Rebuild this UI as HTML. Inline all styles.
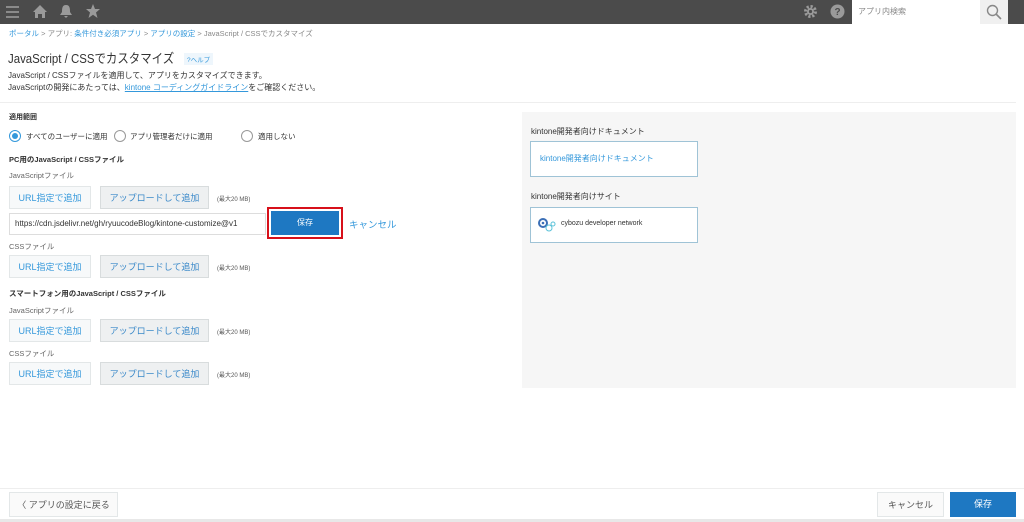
<!DOCTYPE html>
<html><head><meta charset="utf-8"><style>
*{box-sizing:border-box;margin:0;padding:0}
body{width:1024px;height:522px;position:relative;background:#fff;font-family:"Liberation Sans","Noto Sans CJK JP",sans-serif;color:#333;overflow:hidden}
.a{position:absolute;white-space:nowrap}
.btn{position:absolute;background:#f7f9fa;border:1px solid #e3e7e8;color:#3498db;font-size:9px;display:flex;align-items:center;justify-content:center;white-space:nowrap}
.btn2{background:#eef0f1;border-color:#d8dcdd;color:#3a89c9}
.sm{font-size:6px;color:#555}
.lbl{font-size:7.5px;color:#666}
.hd{font-size:7.5px;font-weight:bold;color:#333}
</style></head><body>
<div class="a" style="left:0;top:0;width:1024px;height:24px;background:#4b4b4b"></div>
<svg class="a" style="left:5px;top:5px" width="16" height="14"><g stroke="#999" stroke-width="1.6"><line x1="1" y1="2" x2="14" y2="2"/><line x1="1" y1="7" x2="14" y2="7"/><line x1="1" y1="12" x2="14" y2="12"/></g></svg>
<svg class="a" style="left:32px;top:4px" width="16" height="15"><path d="M1 8 L8 1 L15 8 L13 8 L13 14 L10 14 L10 10 L6 10 L6 14 L3 14 L3 8Z" fill="#9a9a9a"/></svg>
<svg class="a" style="left:59px;top:4px" width="14" height="15"><path d="M7 1 C3 1 3 5 3 8 L1 11 L13 11 L11 8 C11 5 11 1 7 1Z M5 12 L9 12 L7 14Z" fill="#9a9a9a"/></svg>
<svg class="a" style="left:85px;top:3px" width="16" height="16"><path d="M8 1 L10 6 L15 6 L11 9.5 L12.5 15 L8 11.8 L3.5 15 L5 9.5 L1 6 L6 6Z" fill="#9a9a9a"/></svg>
<svg class="a" style="left:803px;top:4px" width="15" height="15"><circle cx="7.5" cy="7.5" r="5" fill="none" stroke="#9a9a9a" stroke-width="3" stroke-dasharray="2.2 1.7"/><circle cx="7.5" cy="7.5" r="3.5" fill="#9a9a9a"/><circle cx="7.5" cy="7.5" r="1.6" fill="#4b4b4b"/></svg>
<svg class="a" style="left:830px;top:4px" width="15" height="15"><circle cx="7.5" cy="7.5" r="7" fill="#9a9a9a"/><text x="7.5" y="11" font-size="10" font-weight="bold" fill="#4b4b4b" text-anchor="middle" font-family="Liberation Sans">?</text></svg>
<div class="a" style="left:852px;top:0;width:128px;height:24px;background:#fff;font-size:8px;color:#888;line-height:24px;padding-left:6px">アプリ内検索</div>
<div class="a" style="left:980px;top:0;width:28px;height:24px;background:#f0f0f0"></div>
<svg class="a" style="left:986px;top:4px" width="16" height="16"><circle cx="6.5" cy="6.5" r="5" fill="none" stroke="#888" stroke-width="1.4"/><line x1="10" y1="10" x2="15" y2="15" stroke="#888" stroke-width="1.6"/></svg>

<div class="a" style="left:9px;top:28px;font-size:7.5px;color:#888"><span style="color:#3498db">ポータル</span> &gt; <span>アプリ: </span><span style="color:#3498db">条件付き必須アプリ</span> &gt; <span style="color:#3498db">アプリの設定</span> &gt; JavaScript / CSSでカスタマイズ</div>
<div class="a" style="left:8px;top:48px;font-size:13px;color:#333;transform:scaleX(0.88);transform-origin:left top">JavaScript / CSSでカスタマイズ</div>
<div class="a" style="left:184px;top:53px;font-size:6.5px;color:#3498db;background:#eef6fc;padding:1px 3px">?ヘルプ</div>
<div class="a" style="left:8px;top:70px;font-size:8px;color:#333">JavaScript / CSSファイルを適用して、アプリをカスタマイズできます。</div>
<div class="a" style="left:8px;top:82px;font-size:8px;color:#333">JavaScriptの開発にあたっては、<span style="color:#3498db;text-decoration:underline">kintone コーディングガイドライン</span>をご確認ください。</div>
<div class="a" style="left:0;top:102px;width:1016px;height:1px;background:#eee"></div>

<div class="a hd" style="left:9px;top:112px;font-size:7px">適用範囲</div>
<div class="a" style="left:9px;top:130px;width:12px;height:12px;border-radius:50%;border:1px solid #3498db;background:#fff"></div>
<div class="a" style="left:12px;top:133px;width:6px;height:6px;border-radius:50%;background:#3498db"></div>
<div class="a" style="left:26px;top:131px;font-size:7.5px">すべてのユーザーに適用</div>
<div class="a" style="left:114px;top:130px;width:12px;height:12px;border-radius:50%;border:1px solid #999;background:#fff"></div>
<div class="a" style="left:130px;top:131px;font-size:7.5px">アプリ管理者だけに適用</div>
<div class="a" style="left:241px;top:130px;width:12px;height:12px;border-radius:50%;border:1px solid #999;background:#fff"></div>
<div class="a" style="left:258px;top:131px;font-size:7.5px">適用しない</div>

<div class="a hd" style="left:9px;top:154px">PC用のJavaScript / CSSファイル</div>
<div class="a lbl" style="left:9px;top:170px">JavaScriptファイル</div>
<div class="btn" style="left:9px;top:186px;width:82px;height:23px">URL指定で追加</div>
<div class="btn btn2" style="left:100px;top:186px;width:109px;height:23px">アップロードして追加</div>
<div class="a sm" style="left:217px;top:194px">(最大20 MB)</div>
<div class="a" style="left:9px;top:213px;width:257px;height:22px;border:1px solid #ddd;font-size:8px;line-height:20px;padding-left:5px;color:#333;overflow:hidden">https://cdn.jsdelivr.net/gh/ryuucodeBlog/kintone-customize@v1</div>
<div class="a" style="left:267px;top:207px;width:76px;height:32px;border:2px solid #d7101a"></div>
<div class="a" style="left:271px;top:211px;width:68px;height:24px;background:#1e78c2;color:#fff;font-size:8px;text-align:center;line-height:24px">保存</div>
<div class="a" style="left:349px;top:217px;font-size:9.5px;color:#3498db">キャンセル</div>

<div class="a lbl" style="left:9px;top:241px">CSSファイル</div>
<div class="btn" style="left:9px;top:255px;width:82px;height:23px">URL指定で追加</div>
<div class="btn btn2" style="left:100px;top:255px;width:109px;height:23px">アップロードして追加</div>
<div class="a sm" style="left:217px;top:263px">(最大20 MB)</div>

<div class="a hd" style="left:9px;top:288px">スマートフォン用のJavaScript / CSSファイル</div>
<div class="a lbl" style="left:9px;top:305px">JavaScriptファイル</div>
<div class="btn" style="left:9px;top:319px;width:82px;height:23px">URL指定で追加</div>
<div class="btn btn2" style="left:100px;top:319px;width:109px;height:23px">アップロードして追加</div>
<div class="a sm" style="left:217px;top:327px">(最大20 MB)</div>
<div class="a lbl" style="left:9px;top:348px">CSSファイル</div>
<div class="btn" style="left:9px;top:362px;width:82px;height:23px">URL指定で追加</div>
<div class="btn btn2" style="left:100px;top:362px;width:109px;height:23px">アップロードして追加</div>
<div class="a sm" style="left:217px;top:370px">(最大20 MB)</div>

<div class="a" style="left:522px;top:112px;width:494px;height:276px;background:#f6f6f6"></div>
<div class="a" style="left:531px;top:126px;font-size:8px;color:#333">kintone開発者向けドキュメント</div>
<div class="a" style="left:530px;top:141px;width:168px;height:36px;border:1px solid #9fc3d6;background:#fff;font-size:8px;color:#3498db;line-height:34px;padding-left:9px">kintone開発者向けドキュメント</div>
<div class="a" style="left:531px;top:191px;font-size:8px;color:#333">kintone開発者向けサイト</div>
<div class="a" style="left:530px;top:207px;width:168px;height:36px;border:1px solid #9fc3d6;background:#fff"></div>
<svg class="a" style="left:538px;top:216px" width="20" height="18"><circle cx="5" cy="7" r="4" fill="none" stroke="#3b6fb6" stroke-width="2"/><circle cx="5" cy="7" r="1.3" fill="#3b6fb6"/><circle cx="11" cy="12" r="3" fill="none" stroke="#5cc3d9" stroke-width="1"/><circle cx="15" cy="8" r="2" fill="none" stroke="#5cc3d9" stroke-width="1"/></svg>
<div class="a" style="left:561px;top:220px;font-size:7px;color:#333">cybozu developer network</div>

<div class="a" style="left:0;top:488px;width:1024px;height:1px;background:#eee"></div>
<div class="a" style="left:0;top:519px;width:1024px;height:3px;background:#e8e8e8"></div>
<div class="btn" style="left:9px;top:492px;width:109px;height:25px;color:#555;font-size:9px;background:#fafafa">〈 アプリの設定に戻る</div>
<div class="btn" style="left:877px;top:492px;width:67px;height:25px;color:#555;font-size:9px;background:#fafafa">キャンセル</div>
<div class="a" style="left:950px;top:492px;width:66px;height:25px;background:#1e78c2;color:#fff;font-size:9px;text-align:center;line-height:25px">保存</div>
</body></html>
